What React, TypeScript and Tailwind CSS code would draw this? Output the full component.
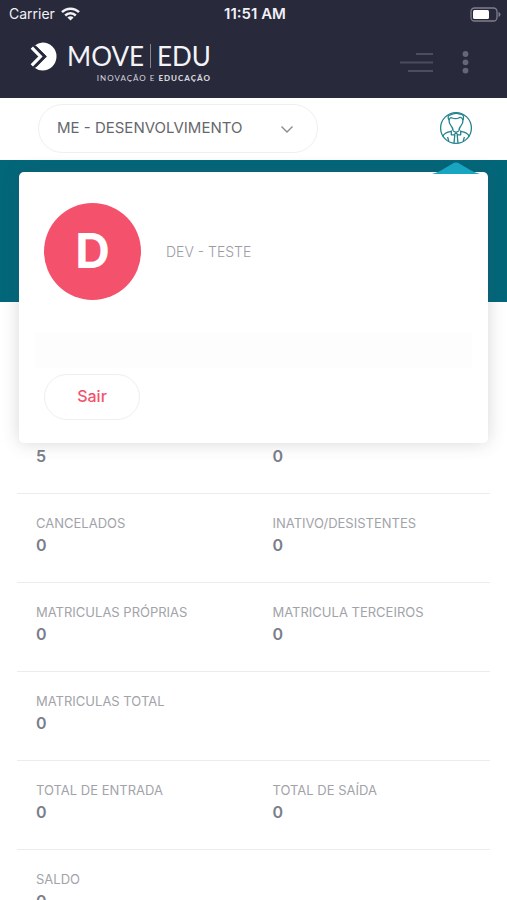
import React from "react";

type Stat = { label?: string; value: string };

const rows: Stat[][] = [
  [{ value: "5" }, { value: "0" }],
  [
    { label: "CANCELADOS", value: "0" },
    { label: "INATIVO/DESISTENTES", value: "0" },
  ],
  [
    { label: "MATRICULAS PRÓPRIAS", value: "0" },
    { label: "MATRICULA TERCEIROS", value: "0" },
  ],
  [{ label: "MATRICULAS TOTAL", value: "0" }],
  [
    { label: "TOTAL DE ENTRADA", value: "0" },
    { label: "TOTAL DE SAÍDA", value: "0" },
  ],
  [{ label: "SALDO", value: "0" }],
];

function StatusBar() {
  return (
    <div className="grid h-7 grid-cols-3 items-center pl-[9px] pr-[6px] text-[#f1f1f6]">
      <div className="flex items-center gap-[6px]">
        <span className="text-[14px] leading-5">Carrier</span>
        <svg width="19" height="14" viewBox="0 0 19 14" fill="none" stroke="currentColor" strokeWidth="2.5">
          <path d="M1 5.2a12 12 0 0 1 17 0" />
          <path d="M4.200 8.500a7.500 7.500 0 0 1 10.600 0" />
          <path d="M9.500 13.600 6.400 10.600a4.400 4.400 0 0 1 6.200 0z" fill="currentColor" stroke="none" />
        </svg>
      </div>
      <span className="text-center text-[15px] font-semibold leading-5">11:51 AM</span>
      <svg className="justify-self-end" width="31" height="15" viewBox="0 0 31 15">
        <rect x="1" y="1" width="26" height="13" rx="3.5" fill="none" stroke="#7f7f8c" strokeWidth="1.3" />
        <rect x="3" y="3" width="16" height="9" rx="1.5" fill="#fff" />
        <path d="M28.500 5v5q2-.8 2-2.500t-2-2.500z" fill="#7f7f8c" />
      </svg>
    </div>
  );
}

function Logo() {
  return (
    <a href="#" className="flex items-start gap-[10px] text-[#f4f4f8]">
      <svg width="27" height="29" viewBox="0 0 27 29" className="mt-[2px]">
        <path
          fill="#fff"
          d="M4.500 3.800A14 14 0 0 1 12.500.5a14 14 0 0 1 0 28 14 14 0 0 1-8-2.800l2.400-1.300 9.900-9.900L6.900 4.700z"
        />
        <path d="M1.800 5.600 10.400 14.500l-8.600 8.900" fill="none" stroke="#fff" strokeWidth="3.200" />
        <path d="M4.700 3.800 15.300 14.500 4.700 25.200" fill="none" stroke="#28293b" strokeWidth="1.800" />
      </svg>
      <span className="flex flex-col items-end">
        <span className="flex items-center gap-[6px] font-[Lato,sans-serif] text-[26px] leading-8">
          <span>MOVE</span>
          <span className="h-6 w-px bg-[#85858f]" />
          <span>EDU</span>
        </span>
        <span className="font-[Lato,sans-serif] text-[8px] leading-3 tracking-[1px] text-[#d5d5dc]">
          INOVAÇÃO E <b className="font-black">EDUCAÇÃO</b>
        </span>
      </span>
    </a>
  );
}

function UserIcon() {
  return (
    <svg width="34" height="34" viewBox="0 0 34 34" fill="none" stroke="#24838c" strokeWidth="1.300" strokeLinejoin="round">
      <circle cx="17" cy="17" r="15.400" />
      <path d="M10 9Q7.800 5 11 4q2-.3 3-1.200 4-1 7 .4 4 .3 3.500 3.300L24 9" />
      <path d="M10 8.500q-.2 3.500 2 6.200 2 2 2 5M24 8.500q.2 3.500-2 6.200-2 2-2 5" />
      <path d="M10 9q.8-3 3.200-2 3.800 1.500 7-.3 2.500-1 3.800 2.300" />
      <path d="M12.300 19.500v4.300h3l1.700-2.300 1.700 2.300h3v-4.300M14 19.700l3 1.800 3-1.800M15.800 24 15 32M18.200 24l.8 8" />
      <path d="M12.300 20.300Q5 21.500 3.800 25.500M21.700 20.300q7.300 1.200 8.500 5.200M8.600 26l1.200 4.300M25.400 26l-1.200 4.300" />
    </svg>
  );
}

function ProfileMenu() {
  return (
    <section
      aria-label="Perfil"
      className="absolute inset-x-[19px] top-[74px] z-10 rounded-[5px] bg-white pt-[31px] pb-[23px] shadow-[0_0_18px_rgba(60,60,75,0.2)]"
    >
      <svg className="absolute -top-[10px] right-2" width="48" height="12" viewBox="0 0 48 12">
        <path d="M0 12Q5 10.500 8 9L20 2Q24-.8 28 2L40 9q3 1.500 8 3z" fill="#17a5c1" />
      </svg>
      <div className="flex items-center gap-[25px] px-[25px]">
        <div className="flex size-[97px] items-center justify-center rounded-full bg-[#f4516c] pb-[2px] text-[48px] font-bold leading-[48px] text-white">
          D
        </div>
        <span className="text-[14px] font-light leading-6 text-[#9b9ca6]">DEV - TESTE</span>
      </div>
      <div className="mx-4 mt-8 h-9 bg-[#fdfdfd]" />
      <div className="px-[25px] pt-[6px]">
        <button className="h-[46px] w-24 rounded-full border border-[#efeff3] pb-[2px] text-[16px] font-medium text-[#f4516c]">
          Sair
        </button>
      </div>
    </section>
  );
}

function StatCell({ label, value }: Stat) {
  return (
    <div className="flex flex-col justify-end pl-[19px]">
      {label && <dt className="text-[13px] leading-6 text-[#a2a3a9]">{label}</dt>}
      <dd className="text-[16px] font-semibold leading-5 text-[#7b7e8a]">{value}</dd>
    </div>
  );
}

export default function App() {
  return (
    <div className="h-screen overflow-hidden bg-white font-[Inter,'Noto_Sans',sans-serif]">
      <header className="h-[98px] bg-[#28293b]">
        <StatusBar />
        <div className="flex items-start justify-between pt-[12px] pr-[37px] pl-[30px]">
          <Logo />
          <div className="flex items-center gap-[28px] pt-[10px]">
            <button aria-label="Menu">
              <svg width="33" height="24" viewBox="0 0 33 24" stroke="#4d4d60" strokeWidth="2">
                <path d="M16 4h17M0 12.500h33M8 21h25" />
              </svg>
            </button>
            <button aria-label="Mais opções">
              <svg width="9" height="24" viewBox="0 0 9 24" fill="#65667a">
                <circle cx="4.500" cy="4" r="2.900" />
                <circle cx="4.500" cy="12.300" r="2.900" />
                <circle cx="4.500" cy="20.600" r="2.900" />
              </svg>
            </button>
          </div>
        </div>
      </header>
      <div className="relative">
        <div className="flex h-[62px] items-center justify-between pr-[34px] pl-[38px] pb-[2px]">
          <div className="relative">
            <select
              aria-label="Unidade"
              className="h-[49px] w-[280px] appearance-none rounded-full border border-[#efeff3] bg-white pr-12 pl-[18px] text-[15px] text-[#66676d]"
            >
              <option>ME - DESENVOLVIMENTO</option>
            </select>
            <svg className="pointer-events-none absolute top-[21px] right-6" width="14" height="9" viewBox="0 0 14 9" fill="none" stroke="#8b8c93" strokeWidth="1.400">
              <path d="m1.500 1.500 5.500 5.500 5.500-5.500" />
            </svg>
          </div>
          <button aria-label="Usuário">
            <UserIcon />
          </button>
        </div>
        <ProfileMenu />
        <div className="h-[142px] bg-[#03677a]" />
      </div>
      <main className="px-[17px] pt-[103px]">
        {rows.map((row, i) => (
          <dl key={i} className="grid h-[89px] grid-cols-2 border-b border-[#ebecf0] pt-[17px] pb-[27px]">
            {row.map((s, j) => (
              <StatCell key={j} {...s} />
            ))}
          </dl>
        ))}
      </main>
    </div>
  );
}
